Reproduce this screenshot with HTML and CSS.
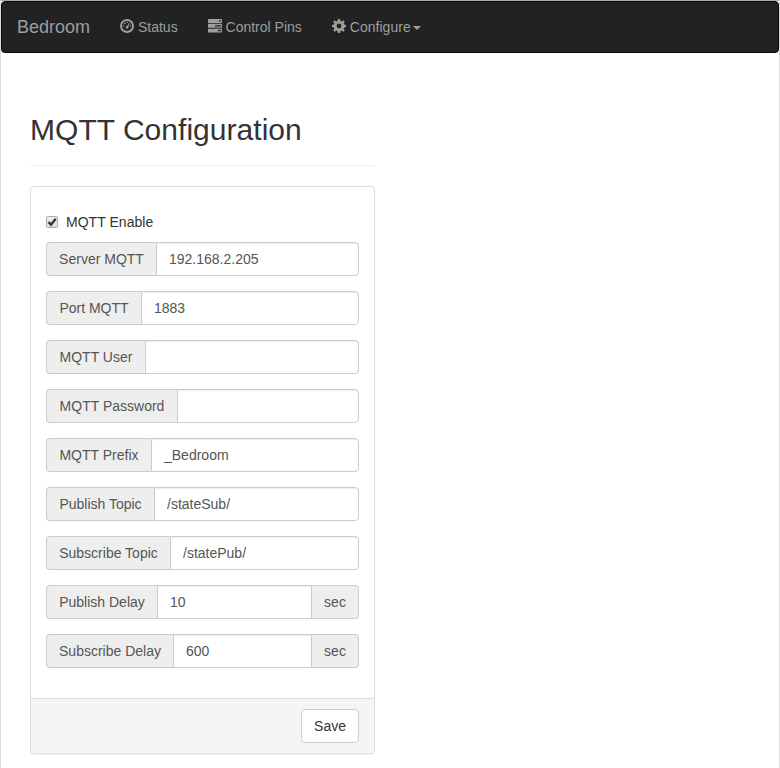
FILE: index.html
```html
<!DOCTYPE html>
<html lang="en">
<head>
<meta charset="utf-8">
<title>MQTT Configuration</title>
<link rel="stylesheet" href="styles.css">
</head>
<body>
<nav class="navbar">
  <a class="brand">Bedroom</a>
  <a class="nav-link"><svg class="icon" viewBox="0 0 14 14"><circle cx="7" cy="7" r="6" fill="none" stroke="currentColor" stroke-width="2"/><g fill="currentColor"><circle cx="3.6" cy="6.8" r=".75"/><circle cx="4.7" cy="4.4" r=".75"/><circle cx="7" cy="3.5" r=".75"/><circle cx="10.4" cy="6.8" r=".75"/><path d="M9.3 3.6l.7.5-1.700 3.300a1.400 1.400 0 1 1-1-.6z"/></g></svg> Status</a>
  <a class="nav-link"><svg class="icon icon-tasks" viewBox="0 0 14 14.4" preserveAspectRatio="none"><path fill="currentColor" fill-rule="evenodd" d="M.6 0h12.8q.6 0 .6.6v2.8q0 .6-.6.6H.6Q0 4 0 3.4V.6Q0 0 .6 0zM11 1.3v1.2h2V1.3zM.6 5h12.8q.6 0 .6.6v2.8q0 .6-.6.6H.6Q0 9 0 8.400V5.600Q0 5 .6 5zM7 6.400v1.200h6V6.400zM.6 10h12.800q.6 0 .6.6v2.800q0 .6-.6.6H.6Q0 14 0 13.400v-2.800q0-.6.6-.6zM10 11.400v1.200h3v-1.200z"/></svg> Control Pins</a>
  <a class="nav-link link-configure"><svg class="icon" viewBox="0 0 14 14"><path fill="currentColor" fill-rule="evenodd" d="M5.900 0h2.200l.4 2 1.200.5 1.700-1.200 1.400 1.400-1.200 1.700.5 1.200 1.900.4v2.100l-1.900.4-.5 1.200 1.200 1.700-1.400 1.400-1.700-1.200-1.200.5-.4 1.900H5.900l-.4-1.900-1.200-.5-1.700 1.200-1.400-1.400 1.200-1.700-.5-1.200L0 8.100V6l1.900-.4.5-1.200-1.200-1.700 1.400-1.400 1.700 1.200 1.200-.5zM7 4.600a2.400 2.400 0 1 0 0 4.800 2.400 2.400 0 0 0 0-4.800z"/></svg> Configure<span class="caret"></span></a>
</nav>
<main class="content">
  <h2 class="page-title">MQTT Configuration</h2>
  <form class="panel">
    <div class="panel-body">
      <label class="checkbox"><span class="check"><svg viewBox="0 0 12 12"><path d="M2.500 6l2.500 2.700L9.700 2.800" fill="none" stroke="#333" stroke-width="2.300"/></svg></span>MQTT Enable</label>
      <div class="group"><span class="addon server">Server MQTT</span><input class="field" value="192.168.2.205"></div>
      <div class="group"><span class="addon port">Port MQTT</span><input class="field" value="1883"></div>
      <div class="group"><span class="addon user">MQTT User</span><input class="field"></div>
      <div class="group"><span class="addon password">MQTT Password</span><input class="field"></div>
      <div class="group"><span class="addon prefix">MQTT Prefix</span><input class="field" value="_Bedroom"></div>
      <div class="group"><span class="addon pub-topic">Publish Topic</span><input class="field" value="/stateSub/"></div>
      <div class="group"><span class="addon sub-topic">Subscribe Topic</span><input class="field" value="/statePub/"></div>
      <div class="group"><span class="addon pub-delay">Publish Delay</span><input class="field" value="10"><span class="addon unit">sec</span></div>
      <div class="group"><span class="addon sub-delay">Subscribe Delay</span><input class="field" value="600"><span class="addon unit">sec</span></div>
    </div>
    <div class="panel-footer"><button class="save" type="button">Save</button></div>
  </form>
</main>
</body>
</html>
```

FILE: styles.css
```css
* { box-sizing: border-box; }
html { background: #fff; }
body {
  margin: 0;
  height: 768px;
  overflow: hidden;
  border: 1px solid #ddd;
  border-top-color: #aaa;
  border-bottom: 0;
  font: 14px/20px "Liberation Sans", Arial, sans-serif;
  color: #333;
}
.navbar {
  display: flex;
  height: 52px;
  background: #222;
  border: 1px solid #080808;
  border-radius: 4px;
  color: #9d9d9d;
}
.brand { padding: 15px; font-size: 18px; }
.nav-link { padding: 15px; white-space: nowrap; }
.link-configure { letter-spacing: .04px; }
.icon {
  position: relative;
  top: 1px;
  display: inline-block;
  width: 14px;
  height: 14px;
}
.icon-tasks { top: .6px; }
.caret {
  display: inline-block;
  margin-left: 2px;
  vertical-align: middle;
  border-top: 4px solid;
  border-left: 4px solid transparent;
  border-right: 4px solid transparent;
}
.content { width: 345px; margin: 60px 0 0 29px; }
.page-title {
  margin: 0 0 20px;
  padding-bottom: 19px;
  border-bottom: 1px solid #eee;
  font-size: 30px;
  font-weight: 400;
  line-height: 33px;
  letter-spacing: .03px;
}
.panel {
  margin: 0;
  border: 1px solid #ddd;
  border-radius: 4px;
  box-shadow: 0 1px 1px rgba(0, 0, 0, .05);
}
.panel-body { padding: 25px 15px 15px; }
.checkbox {
  display: flex;
  align-items: center;
  margin-bottom: 10px;
  letter-spacing: .03px;
}
.check {
  width: 12px;
  height: 12px;
  margin-right: 8px;
  border: 1px solid #aaa;
  border-radius: 2px;
  background: linear-gradient(#eee, #ddd);
}
.check svg { display: block; width: 12px; height: 12px; margin: -1px; }
.group { display: flex; height: 34px; margin-bottom: 15px; }
.addon {
  display: flex;
  flex: none;
  align-items: center;
  justify-content: center;
  border: 1px solid #ccc;
  background: #eee;
  color: #555;
  white-space: nowrap;
}
.addon:first-child { border-right: 0; border-radius: 4px 0 0 4px; }
.addon:last-child { border-left: 0; border-radius: 0 4px 4px 0; }
.server { width: 110px; }
.port { width: 95px; }
.user { width: 99px; }
.password { width: 131px; }
.prefix { width: 105px; }
.pub-topic { width: 108px; }
.sub-topic { width: 124px; }
.pub-delay { width: 111px; }
.sub-delay { width: 127px; }
.unit { width: 47px; }
.field {
  flex: 1;
  min-width: 0;
  padding: 6px 12px;
  border: 1px solid #ccc;
  border-radius: 0;
  background: #fff;
  box-shadow: inset 0 1px 1px rgba(0, 0, 0, .075);
  color: #555;
  font: inherit;
  outline: 0;
}
.field:last-child { border-radius: 0 4px 4px 0; }
.panel-footer {
  display: flex;
  justify-content: flex-end;
  padding: 10px 15px;
  border-top: 1px solid #ddd;
  border-radius: 0 0 3px 3px;
  background: #f5f5f5;
}
.save {
  height: 34px;
  padding: 6px 12px;
  border: 1px solid #ccc;
  border-radius: 4px;
  background: #fff;
  color: #333;
  font: inherit;
}
```
